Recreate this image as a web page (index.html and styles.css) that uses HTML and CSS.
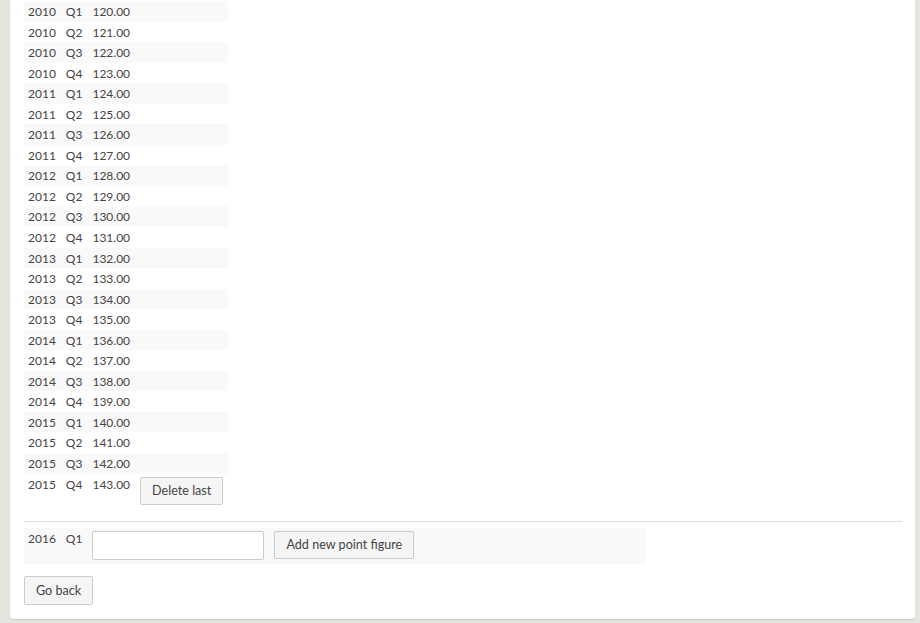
FILE: index.html
```html
<!DOCTYPE html>
<html lang="en">
<head>
    <meta charset="UTF-8">
    <title>Point figures</title>
    <link rel="stylesheet" href="styles.css">
</head>
<body>
    <div class="panel">
        <table class="figures">
            <tr><td>2010</td><td>Q1</td><td>120.00</td><td></td></tr>
            <tr><td>2010</td><td>Q2</td><td>121.00</td><td></td></tr>
            <tr><td>2010</td><td>Q3</td><td>122.00</td><td></td></tr>
            <tr><td>2010</td><td>Q4</td><td>123.00</td><td></td></tr>
            <tr><td>2011</td><td>Q1</td><td>124.00</td><td></td></tr>
            <tr><td>2011</td><td>Q2</td><td>125.00</td><td></td></tr>
            <tr><td>2011</td><td>Q3</td><td>126.00</td><td></td></tr>
            <tr><td>2011</td><td>Q4</td><td>127.00</td><td></td></tr>
            <tr><td>2012</td><td>Q1</td><td>128.00</td><td></td></tr>
            <tr><td>2012</td><td>Q2</td><td>129.00</td><td></td></tr>
            <tr><td>2012</td><td>Q3</td><td>130.00</td><td></td></tr>
            <tr><td>2012</td><td>Q4</td><td>131.00</td><td></td></tr>
            <tr><td>2013</td><td>Q1</td><td>132.00</td><td></td></tr>
            <tr><td>2013</td><td>Q2</td><td>133.00</td><td></td></tr>
            <tr><td>2013</td><td>Q3</td><td>134.00</td><td></td></tr>
            <tr><td>2013</td><td>Q4</td><td>135.00</td><td></td></tr>
            <tr><td>2014</td><td>Q1</td><td>136.00</td><td></td></tr>
            <tr><td>2014</td><td>Q2</td><td>137.00</td><td></td></tr>
            <tr><td>2014</td><td>Q3</td><td>138.00</td><td></td></tr>
            <tr><td>2014</td><td>Q4</td><td>139.00</td><td></td></tr>
            <tr><td>2015</td><td>Q1</td><td>140.00</td><td></td></tr>
            <tr><td>2015</td><td>Q2</td><td>141.00</td><td></td></tr>
            <tr><td>2015</td><td>Q3</td><td>142.00</td><td></td></tr>
            <tr><td>2015</td><td>Q4</td><td>143.00</td><td><button class="btn delete">Delete last</button></td></tr>
        </table>

        <hr>

        <form class="add-form" onsubmit="event.preventDefault()">
            <table class="figures new-row">
                <tr>
                    <td>2016</td>
                    <td>Q1</td>
                    <td><input type="text" class="value-input"></td>
                    <td><button type="submit" class="btn">Add new point figure</button></td>
                    <td class="filler"></td>
                </tr>
            </table>
        </form>

        <button class="btn back">Go back</button>
    </div>
</body>
</html>
```

FILE: styles.css
```css
html, body {
    margin: 0;
    padding: 0;
    background: #e5e5e0;
    font-family: Lato, "Liberation Sans", sans-serif;
    font-size: 12px;
    color: #444;
}
.panel {
    margin: 0 5px 4px 10px;
    padding: 1px 13px 14px 14px;
    background: #fff;
    border-radius: 0 0 3px 3px;
    box-shadow: 0 1px 1px #c8c8c2;
    height: 619px;
    box-sizing: border-box;
}
.figures {
    border-collapse: collapse;
    border-spacing: 0;
}
.figures td {
    padding: 3px 5px 2px 5px;
    line-height: 15.55px;
    vertical-align: top;
    white-space: nowrap;
}
.figures td:first-child {
    padding-left: 4px;
}
.figures tr:nth-child(odd) td {
    background: #f9f9f9;
}
.figures td:nth-child(4) {
    width: 82px;
}
.delete {
    margin-top: 1px;
}
hr {
    border: none;
    border-top: 1px solid #ddd;
    margin: 14px 0 6px 0;
}
.add-form {
    margin: 0;
}
.new-row {
    width: 622px;
}
.new-row td {
    padding-bottom: 4px;
}
.new-row td:nth-child(4) {
    width: auto;
}
.new-row .filler {
    width: 100%;
}
.value-input {
    width: 172px;
    height: 29px;
    box-sizing: border-box;
    border: 1px solid #ccc;
    border-radius: 2px;
    margin: 0;
    padding: 4px 6px;
    font-family: inherit;
    font-size: 12px;
}
.btn {
    height: 28px;
    padding: 0 11px;
    border: 1px solid #ccc;
    border-radius: 2px;
    background: #f5f5f5;
    color: #444;
    font-family: inherit;
    font-size: 12.6px;
    cursor: pointer;
    margin: 0;
}
.back {
    margin-top: 12px;
    height: 29px;
}
```
